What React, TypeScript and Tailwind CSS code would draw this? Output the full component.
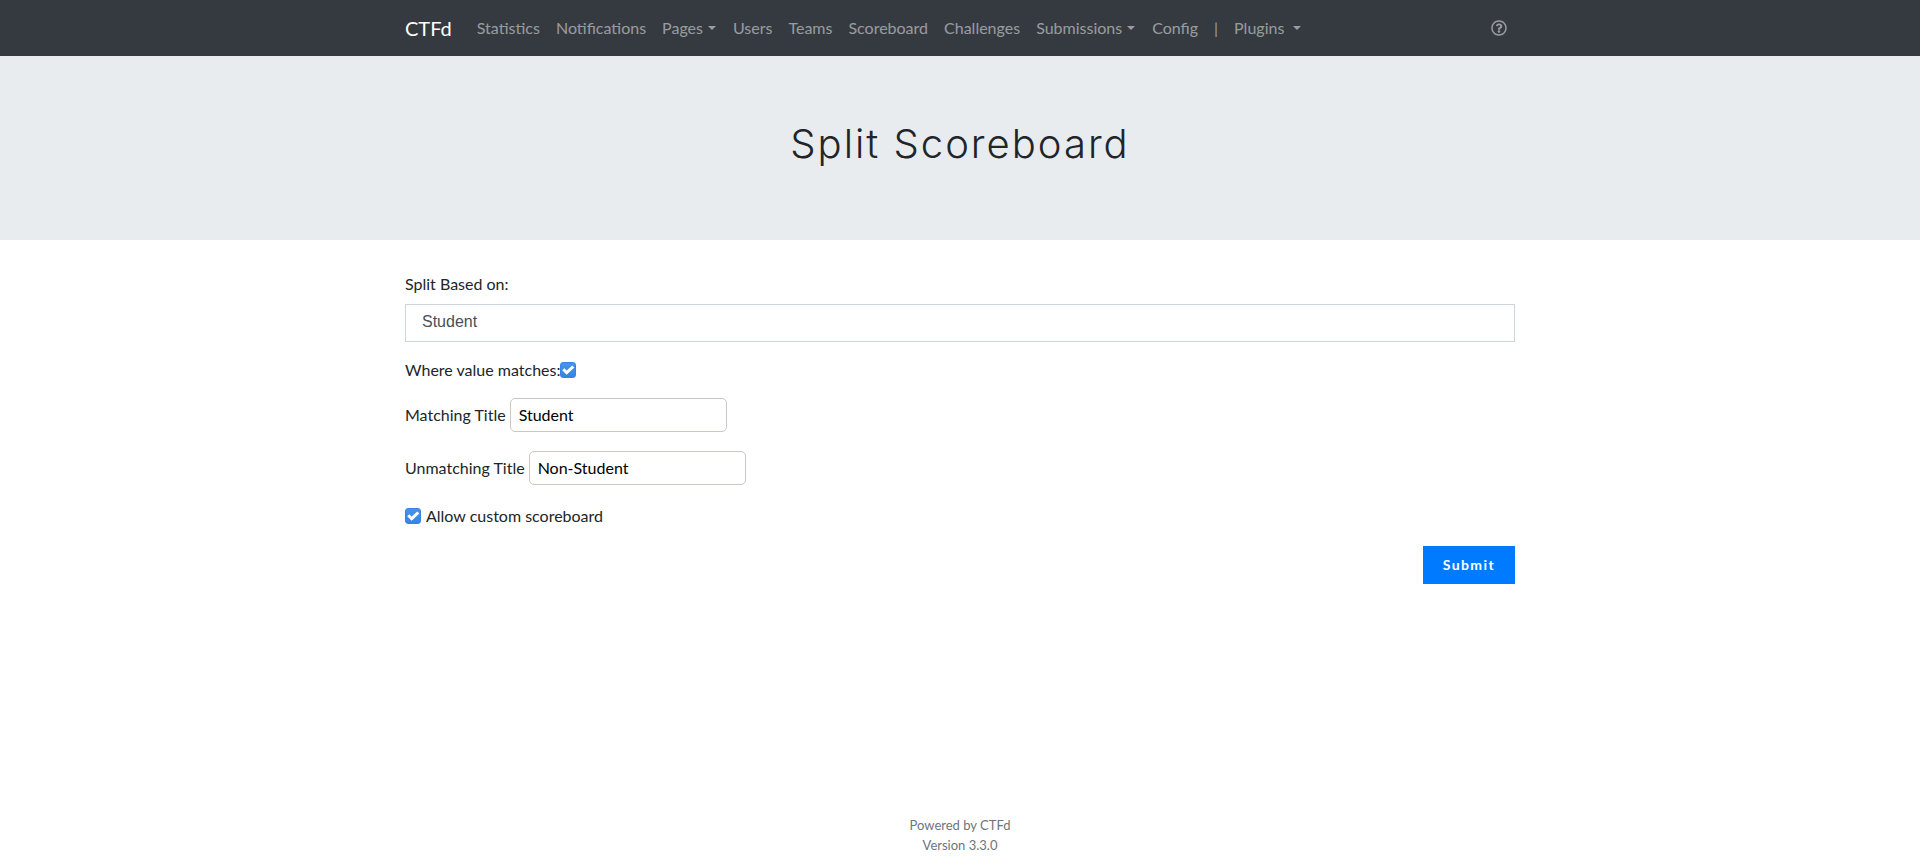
import { FaRegQuestionCircle } from "react-icons/fa";

type NavEntry = { label: string; menu?: "tight" | "spaced" };

const navEntries: NavEntry[] = [
  { label: "Statistics" },
  { label: "Notifications" },
  { label: "Pages", menu: "tight" },
  { label: "Users" },
  { label: "Teams" },
  { label: "Scoreboard" },
  { label: "Challenges" },
  { label: "Submissions", menu: "tight" },
  { label: "Config" },
];

function NavItem({ label, menu }: NavEntry) {
  return (
    <li>
      <a href="#" className="flex items-center p-2 hover:text-white/75">
        {label}
        {menu && (
          <span
            className={
              "border-x-4 border-t-4 border-x-transparent border-t-current " +
              (menu === "spaced" ? "mr-px ml-[9px]" : "mr-px ml-[5px]")
            }
          />
        )}
      </a>
    </li>
  );
}

function Tick({ id }: { id: string }) {
  return (
    <span className="grid size-4 shrink-0">
      <input
        id={id}
        type="checkbox"
        defaultChecked
        className="peer col-start-1 row-start-1 size-4 appearance-none rounded-[3px] border border-[#cdc7c2] bg-white checked:border-[#3584e4] checked:bg-linear-to-b checked:from-[#4b92e7] checked:to-[#3584e4]"
      />
      <svg
        viewBox="0 0 16 16"
        aria-hidden="true"
        className="pointer-events-none invisible col-start-1 row-start-1 size-4 peer-checked:visible"
      >
        <path d="M3.3 7.3 6.7 10.7 13.3 4.5" fill="none" stroke="#fff" strokeWidth="3" />
      </svg>
    </span>
  );
}

function TitleField({ id, label, value }: { id: string; label: string; value: string }) {
  return (
    <div className="flex flex-wrap items-center gap-1">
      <label htmlFor={id}>{label}</label>
      <input
        id={id}
        type="text"
        defaultValue={value}
        className="h-[34px] w-[217px] rounded-[5px] border border-[#cdc7c2] bg-white px-2 pb-0.5 text-black"
      />
    </div>
  );
}

export default function App() {
  return (
    <div className="flex min-h-screen flex-col bg-white font-['Lato',sans-serif] text-base text-[#212529]">
      <nav className="bg-[#343a40] py-2 text-white/50">
        <div className="mx-auto flex max-w-[1140px] flex-wrap items-center px-[15px]">
          <a href="#" className="mr-[17px] text-xl text-white">
            CTFd
          </a>
          <ul className="flex flex-wrap">
            {navEntries.map((entry) => (
              <NavItem key={entry.label} {...entry} />
            ))}
            <li className="p-2">|</li>
            <NavItem label="Plugins" menu="spaced" />
          </ul>
          <a href="#" aria-label="Help" className="ml-auto p-2">
            <FaRegQuestionCircle className="size-4" />
          </a>
        </div>
      </nav>

      <header className="bg-[#e9ecef] px-4 pt-16 pb-[72px] text-center">
        <h1 className="font-['Inter',sans-serif] text-[40px] leading-[48px] font-light tracking-wider">
          Split Scoreboard
        </h1>
      </header>

      <main className="mx-auto w-full max-w-[1140px] px-[15px] pt-8">
        <form className="flex flex-col gap-4" onSubmit={(event) => event.preventDefault()}>
          <div className="flex flex-col gap-2">
            <label htmlFor="split-field">Split Based on:</label>
            <select
              id="split-field"
              className="h-[38px] w-full appearance-none border border-[#ced4da] bg-white px-4 pb-0.5 font-['Liberation_Sans',sans-serif] text-[#495057]"
            >
              <option>Student</option>
            </select>
          </div>
          <div className="flex items-center">
            <label htmlFor="split-value">Where value matches:</label>
            <Tick id="split-value" />
          </div>
          <TitleField id="matching-title" label="Matching Title" value="Student" />
          <div className="pt-[3px]">
            <TitleField id="unmatching-title" label="Unmatching Title" value="Non-Student" />
          </div>
          <div className="flex items-center gap-[5px] pt-[3px] pb-0.5">
            <Tick id="custom-scoreboard" />
            <label htmlFor="custom-scoreboard">Allow custom scoreboard</label>
          </div>
          <button
            type="submit"
            className="h-[38px] self-end bg-[#007bff] px-5 text-sm font-bold tracking-widest text-white"
          >
            Submit
          </button>
        </form>
      </main>

      <footer className="mt-auto pb-3 text-center text-[13px] leading-5 text-[#6c757d]">
        <a href="#" className="block">
          Powered by CTFd
        </a>
        <p>Version 3.3.0</p>
      </footer>
    </div>
  );
}
